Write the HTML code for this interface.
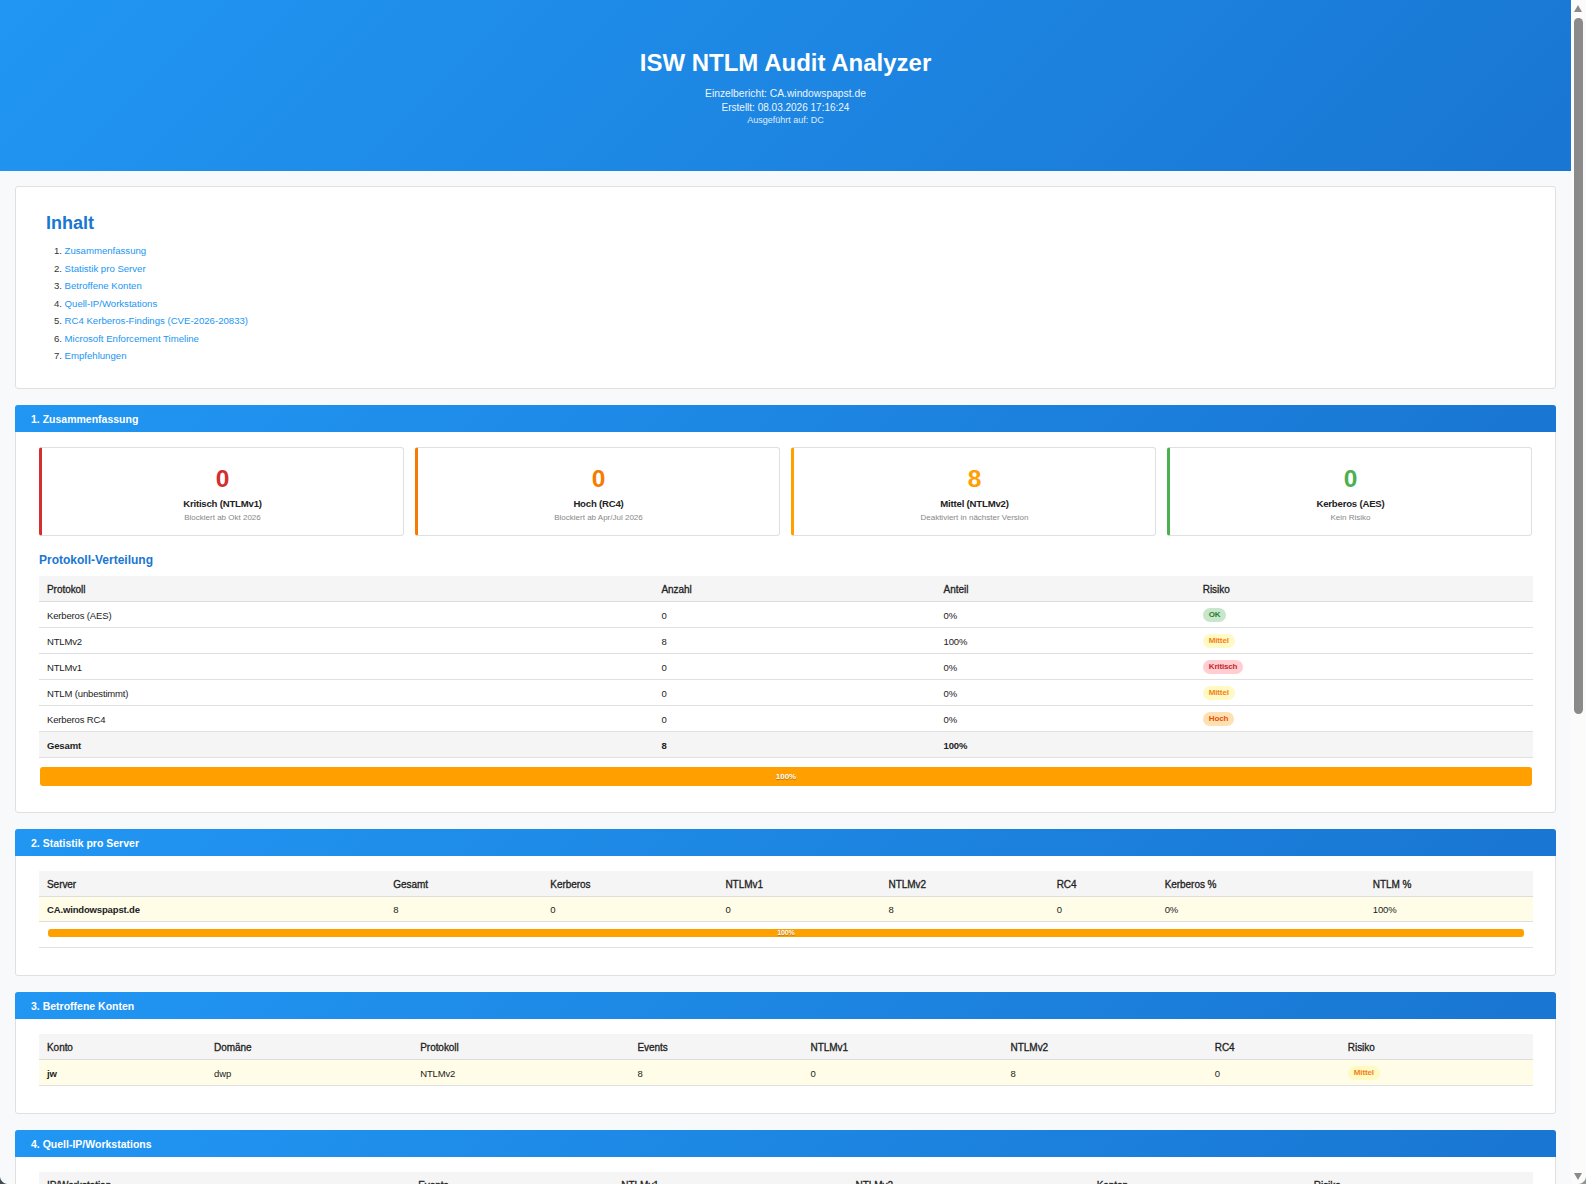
<!DOCTYPE html>
<html lang="de">
<head>
<meta charset="utf-8">
<title>ISW NTLM Audit Analyzer</title>
<style>
*{box-sizing:border-box;}
html,body{margin:0;padding:0;}
html{background:#f8f9fa;overflow:hidden;}
body{font-family:"Liberation Sans",sans-serif;background:#f8f9fa;color:#333;width:1586px;overflow:hidden;height:1184px;position:relative;}
.hdr{width:1571px;}
.hdr{height:171px;background:linear-gradient(135deg,#2196f3 0%,#1976d2 100%);color:#fff;text-align:center;position:relative;}
.hdr h1{position:absolute;left:0;right:0;top:48px;margin:0;font-size:24px;line-height:30px;font-weight:bold;}
.hdr .s1{position:absolute;left:0;right:0;top:87px;font-size:10.3px;line-height:14px;opacity:.92;}
.hdr .s2{position:absolute;left:0;right:0;top:101px;font-size:10px;line-height:14px;opacity:.92;}
.hdr .s3{position:absolute;left:0;right:0;top:115px;font-size:9px;line-height:11px;opacity:.85;}
.card{position:absolute;left:15px;width:1541px;background:#fff;border:1px solid #e0e0e0;border-radius:3px;}
.toc{top:186px;height:203px;}
.toc h2{position:absolute;left:30px;top:25px;margin:0;color:#1976d2;font-size:18px;line-height:22px;font-weight:bold;}
.toc ol{position:absolute;left:38px;top:57px;margin:0;padding:0 0 0 0;list-style:none;font-size:9.6px;}
.toc li{height:17.5px;line-height:14px;white-space:nowrap;}
.toc li span{display:inline-block;width:10.6px;color:#333;}
.toc a{color:#2196f3;text-decoration:none;}
.sec .sh{position:absolute;left:-1px;right:-1px;top:-1px;height:27px;border-radius:3px 3px 0 0;background:linear-gradient(135deg,#2196f3 0%,#1976d2 100%);color:#fff;font-weight:bold;font-size:10.5px;line-height:29px;padding-left:16px;}
.inner{position:absolute;left:23px;right:23px;}
.sc{position:absolute;top:0;height:89px;width:365px;border:1px solid #e0e0e0;border-left:3px solid #d32f2f;border-radius:3px;text-align:center;background:#fff;}
.sc .n{position:absolute;left:0;right:0;top:17px;font-size:24.5px;line-height:28px;font-weight:bold;}
.sc .l{position:absolute;left:0;right:0;top:49.5px;font-size:9.6px;line-height:12px;color:#222;font-weight:bold;letter-spacing:-0.2px;}
.sc .d{position:absolute;left:0;right:0;top:65px;font-size:8px;line-height:10px;color:#888;}
h3{margin:0;position:absolute;color:#1976d2;font-size:12px;line-height:14px;font-weight:bold;}
table{border-collapse:collapse;position:absolute;left:0;width:1494px;table-layout:fixed;font-size:9.5px;letter-spacing:-0.15px;}
th{background:#f5f5f5;text-align:left;font-weight:normal;-webkit-text-stroke:0.3px #222;padding:2px 8px 0;height:25px;font-size:10px;letter-spacing:-0.05px;border-bottom:1px solid #ddd;color:#222;}
td{padding:2px 8px 0;height:26px;border-bottom:1px solid #e0e0e0;color:#222;}
tr.tot td{background:#f5f5f5;font-weight:bold;}
tr.hl td{background:#fffde7;}
tr.h24 td{height:25px;}
.b{display:inline-block;height:14px;line-height:14px;padding:0 6px;border-radius:7px;font-size:8px;font-weight:bold;}
.ok{background:#c8e6c9;color:#2e7d32;}
.mi{background:#fff9c4;color:#f57f17;}
.kr{background:#ffcdd2;color:#c62828;}
.ho{background:#ffe0b2;color:#e65100;}
.bar{position:absolute;background:#ffa000;border-radius:3px;color:#fff;text-align:center;font-size:8px;font-weight:bold;text-shadow:0 1px 1px rgba(0,0,0,.3);}
.sb{position:absolute;left:1571px;top:0;width:15px;height:1184px;background:#fbfbfb;}
</style>
</head>
<body>
<div class="hdr">
  <h1>ISW NTLM Audit Analyzer</h1>
  <div class="s1">Einzelbericht: CA.windowspapst.de</div>
  <div class="s2">Erstellt: 08.03.2026 17:16:24</div>
  <div class="s3">Ausgeführt auf: DC</div>
</div>

<div class="card toc">
  <h2>Inhalt</h2>
  <ol>
    <li><span>1.</span><a>Zusammenfassung</a></li>
    <li><span>2.</span><a>Statistik pro Server</a></li>
    <li><span>3.</span><a>Betroffene Konten</a></li>
    <li><span>4.</span><a>Quell-IP/Workstations</a></li>
    <li><span>5.</span><a>RC4 Kerberos-Findings (CVE-2026-20833)</a></li>
    <li><span>6.</span><a>Microsoft Enforcement Timeline</a></li>
    <li><span>7.</span><a>Empfehlungen</a></li>
  </ol>
</div>

<div class="card sec" style="top:405px;height:408px;">
  <div class="sh">1. Zusammenfassung</div>
  <div class="inner" style="top:41px;">
    <div class="sc" style="left:0;border-left-color:#d32f2f;"><div class="n" style="color:#d32f2f;">0</div><div class="l">Kritisch (NTLMv1)</div><div class="d">Blockiert ab Okt 2026</div></div>
    <div class="sc" style="left:376px;border-left-color:#f57c00;"><div class="n" style="color:#f57c00;">0</div><div class="l">Hoch (RC4)</div><div class="d">Blockiert ab Apr/Jul 2026</div></div>
    <div class="sc" style="left:752px;border-left-color:#ffa000;"><div class="n" style="color:#ffa000;">8</div><div class="l">Mittel (NTLMv2)</div><div class="d">Deaktiviert in nächster Version</div></div>
    <div class="sc" style="left:1128px;border-left-color:#4caf50;"><div class="n" style="color:#4caf50;">0</div><div class="l">Kerberos (AES)</div><div class="d">Kein Risiko</div></div>
    <h3 style="left:0;top:106px;">Protokoll-Verteilung</h3>
    <table style="top:129px;">
      <colgroup><col style="width:614px"><col style="width:282px"><col style="width:259px"><col style="width:338px"></colgroup>
      <tr><th>Protokoll</th><th>Anzahl</th><th>Anteil</th><th>Risiko</th></tr>
      <tr><td>Kerberos (AES)</td><td>0</td><td>0%</td><td><span class="b ok">OK</span></td></tr>
      <tr><td>NTLMv2</td><td>8</td><td>100%</td><td><span class="b mi">Mittel</span></td></tr>
      <tr><td>NTLMv1</td><td>0</td><td>0%</td><td><span class="b kr">Kritisch</span></td></tr>
      <tr><td>NTLM (unbestimmt)</td><td>0</td><td>0%</td><td><span class="b mi">Mittel</span></td></tr>
      <tr><td>Kerberos RC4</td><td>0</td><td>0%</td><td><span class="b ho">Hoch</span></td></tr>
      <tr class="tot"><td>Gesamt</td><td>8</td><td>100%</td><td></td></tr>
    </table>
    <div class="bar" style="left:1px;width:1492px;top:320px;height:19px;line-height:19px;">100%</div>
  </div>
</div>

<div class="card sec" style="top:829px;height:147px;">
  <div class="sh">2. Statistik pro Server</div>
  <div class="inner" style="top:41px;">
    <table style="top:0;">
      <colgroup><col style="width:346px"><col style="width:157px"><col style="width:175px"><col style="width:163px"><col style="width:168px"><col style="width:108px"><col style="width:208px"><col style="width:168px"></colgroup>
      <tr><th>Server</th><th>Gesamt</th><th>Kerberos</th><th>NTLMv1</th><th>NTLMv2</th><th>RC4</th><th>Kerberos %</th><th>NTLM %</th></tr>
      <tr class="hl h24"><td style="font-weight:bold;">CA.windowspapst.de</td><td>8</td><td>0</td><td>0</td><td>8</td><td>0</td><td>0%</td><td>100%</td></tr>
      <tr><td colspan="8" style="height:26px;padding:7px 9px 0;vertical-align:top;"><div style="position:relative;height:8px;background:#ffa000;border-radius:3px;color:#fff;font-size:7px;line-height:8px;text-align:center;font-weight:bold;text-shadow:0 1px 1px rgba(0,0,0,.3);">100%</div></td></tr>
    </table>
  </div>
</div>

<div class="card sec" style="top:992px;height:122px;">
  <div class="sh">3. Betroffene Konten</div>
  <div class="inner" style="top:41px;">
    <table style="top:0;">
      <colgroup><col style="width:167px"><col style="width:206px"><col style="width:217px"><col style="width:173px"><col style="width:200px"><col style="width:204px"><col style="width:133px"><col style="width:193px"></colgroup>
      <tr><th>Konto</th><th>Domäne</th><th>Protokoll</th><th>Events</th><th>NTLMv1</th><th>NTLMv2</th><th>RC4</th><th>Risiko</th></tr>
      <tr class="hl"><td style="font-weight:bold;">jw</td><td>dwp</td><td>NTLMv2</td><td>8</td><td>0</td><td>8</td><td>0</td><td><span class="b mi">Mittel</span></td></tr>
    </table>
  </div>
</div>

<div class="card sec" style="top:1130px;height:120px;">
  <div class="sh">4. Quell-IP/Workstations</div>
  <div class="inner" style="top:41px;">
    <table style="top:0;">
      <colgroup><col style="width:371px"><col style="width:203px"><col style="width:234px"><col style="width:241px"><col style="width:217px"><col style="width:227px"></colgroup>
      <tr><th>IP/Workstation</th><th>Events</th><th>NTLMv1</th><th>NTLMv2</th><th>Konten</th><th>Risiko</th></tr>
    </table>
  </div>
</div>

<div class="sb">
  <div style="position:absolute;left:3px;top:5px;width:0;height:0;border-left:4.5px solid transparent;border-right:4.5px solid transparent;border-bottom:7px solid #8a8a8a;"></div>
  <div style="position:absolute;left:3px;top:18px;width:9px;height:696px;background:#8a8a8a;border-radius:4.5px;"></div>
  <div style="position:absolute;left:3px;top:1173px;width:0;height:0;border-left:4.5px solid transparent;border-right:4.5px solid transparent;border-top:7px solid #8a8a8a;"></div>
</div>
<div style="position:absolute;left:0;top:1176px;width:8px;height:8px;background:radial-gradient(circle at 8px 0,transparent 7.5px,#3d4f55 8.5px);"></div>
<div style="position:absolute;left:1578px;top:1176px;width:8px;height:8px;background:radial-gradient(circle at 0 0,transparent 7.5px,#8a9a90 8.5px);"></div>
</body>
</html>
